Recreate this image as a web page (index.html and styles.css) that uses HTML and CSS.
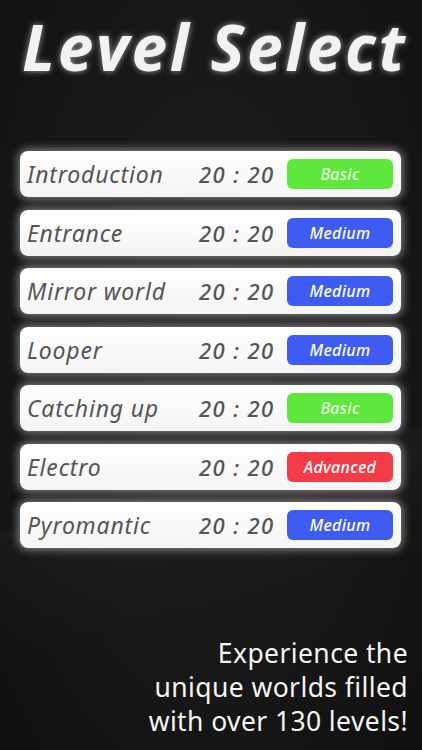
FILE: index.html
```html
<!DOCTYPE html>
<html lang="en">

<head>
    <meta charset="UTF-8">
    <meta name="viewport" content="width=device-width, initial-scale=1.0">
    <link rel="stylesheet" href="styles.css">
</head>

<body>
    <div id="screen">
        <h1 class="title">Level Select</h1>

        <div class="levels">
            <div class="level">
                <span class="name">Introduction</span>
                <span class="time">20 : 20</span>
                <span class="badge basic">Basic</span>
            </div>
            <div class="level">
                <span class="name">Entrance</span>
                <span class="time">20 : 20</span>
                <span class="badge medium">Medium</span>
            </div>
            <div class="level">
                <span class="name">Mirror world</span>
                <span class="time">20 : 20</span>
                <span class="badge medium">Medium</span>
            </div>
            <div class="level">
                <span class="name">Looper</span>
                <span class="time">20 : 20</span>
                <span class="badge medium">Medium</span>
            </div>
            <div class="level">
                <span class="name">Catching up</span>
                <span class="time">20 : 20</span>
                <span class="badge basic">Basic</span>
            </div>
            <div class="level">
                <span class="name">Electro</span>
                <span class="time">20 : 20</span>
                <span class="badge advanced">Advanced</span>
            </div>
            <div class="level">
                <span class="name">Pyromantic</span>
                <span class="time">20 : 20</span>
                <span class="badge medium">Medium</span>
            </div>
        </div>

        <p class="caption">Experience the<br>unique worlds filled<br>with over 130 levels!</p>
    </div>
</body>

</html>
```

FILE: styles.css
```css
html,
body {
    margin: 0;
    padding: 0;
}

body {
    background-color: #141414;
    font-family: "Noto Sans", sans-serif;
}

#screen {
    width: 422px;
    height: 750px;
    overflow: hidden;
    display: flex;
    flex-direction: column;
    background:
        linear-gradient(166deg, rgba(255, 255, 255, 0) 62%, rgba(255, 255, 255, 0.025) 62.5%, rgba(255, 255, 255, 0) 78%),
        radial-gradient(ellipse at 50% 45%, #1c1c1c 0%, #181818 55%, #101010 100%);
}

.title {
    margin: 12px 0 0 0;
    padding-left: 22px;
    height: 70px;
    white-space: nowrap;
    font-family: "Open Sans", sans-serif;
    font-style: italic;
    font-weight: 700;
    font-size: 64px;
    line-height: 70px;
    letter-spacing: 2.6px;
    color: #f2f2f2;
    text-shadow: 0 0 6px rgba(255, 255, 255, 0.6);
}

.levels {
    margin-top: 69px;
    display: flex;
    flex-direction: column;
    gap: 12.5px;
    padding: 0 21px 0 20px;
}

.level {
    height: 46px;
    display: flex;
    align-items: center;
    padding: 0 8px 0 7px;
    border-radius: 8px;
    background: linear-gradient(180deg, #ffffff 0%, #f4f4f4 100%);
    box-shadow: 0 0 8px 2px rgba(255, 255, 255, 0.45);
}

.name {
    flex: 1;
    font-style: italic;
    font-weight: 400;
    font-size: 23px;
    letter-spacing: 0.8px;
    color: #555;
}

.time {
    width: 88px;
    font-style: italic;
    font-weight: 500;
    font-size: 22px;
    letter-spacing: 1.4px;
    color: #555;
}

.badge {
    width: 106px;
    height: 30px;
    border-radius: 6px;
    display: flex;
    align-items: center;
    justify-content: center;
    font-style: italic;
    font-weight: 500;
    font-size: 16px;
    letter-spacing: 0.3px;
    color: #fff;
}

.basic {
    background-color: #5de83b;
    color: #eaffe2;
}

.medium {
    background-color: #3f5cf2;
}

.advanced {
    background-color: #f33c47;
}

.caption {
    margin: auto 14px 12px 0;
    text-align: right;
    font-size: 26.5px;
    line-height: 34px;
    letter-spacing: 0.4px;
    color: #f4f4f4;
}
```
